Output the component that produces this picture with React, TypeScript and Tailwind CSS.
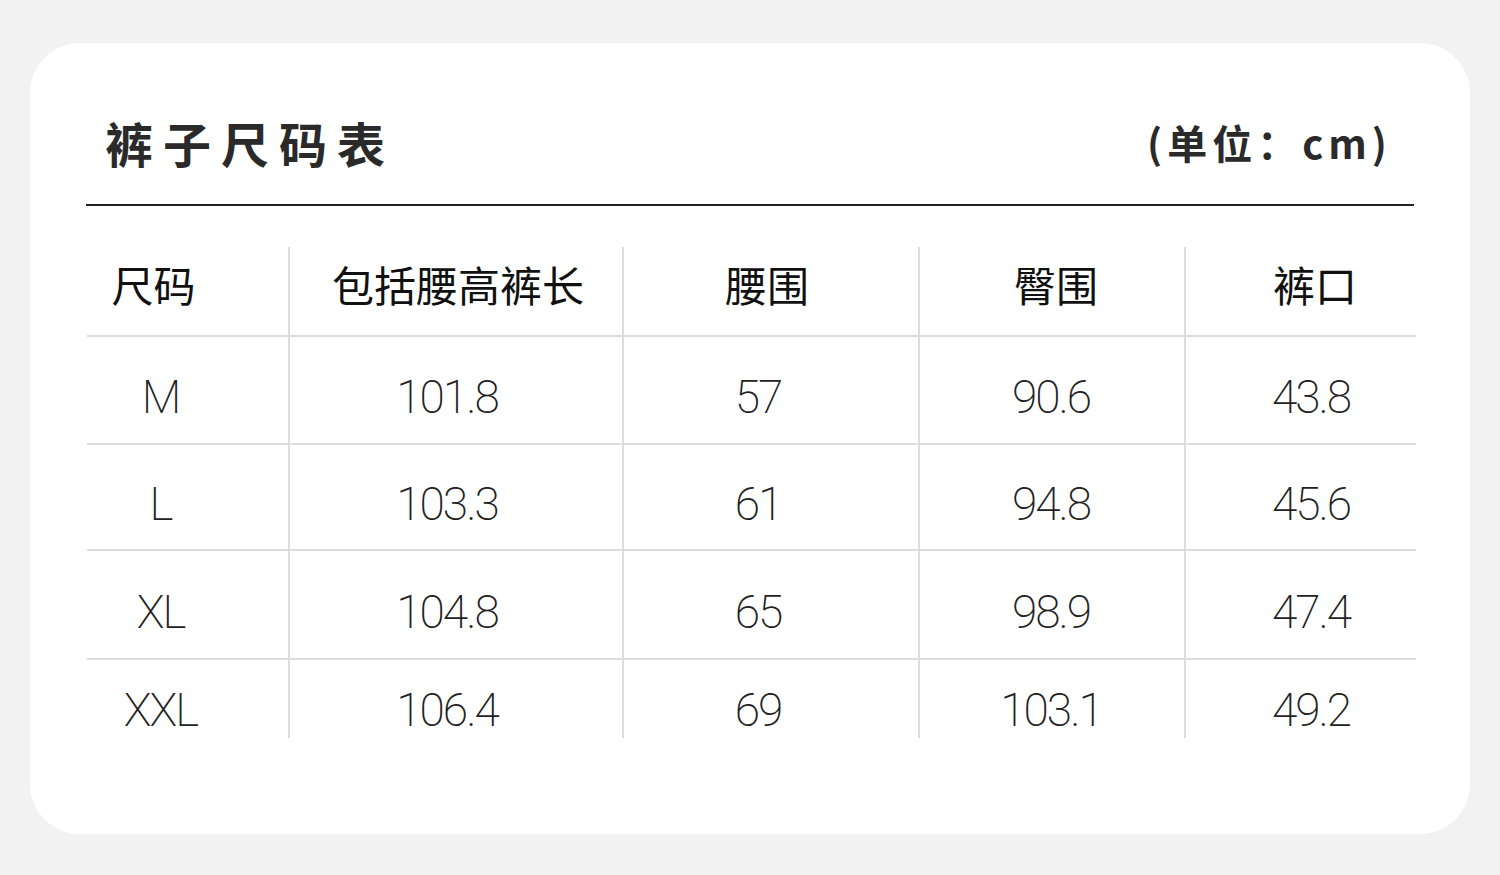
const headers = ["尺码", "包括腰高裤长", "腰围", "臀围", "裤口"]

const rows = [
  ["M", "101.8", "57", "90.6", "43.8"],
  ["L", "103.3", "61", "94.8", "45.6"],
  ["XL", "104.8", "65", "98.9", "47.4"],
  ["XXL", "106.4", "69", "103.1", "49.2"],
]

// per-column horizontal nudges so text sits where the chart has it
const colPad = ["pr-[54px]", "pr-[18px]", "pr-[26px]", "pr-[2px]", "pl-[20px]"]
const headPad = ["pr-[68px]", "pl-[4px]", "pr-[8px]", "pl-[8px]", "pl-[28px]"]

const rowHeights = ["h-[108px]", "h-[106px]", "h-[109px]", "h-[80px]"]

export default function App() {
  return (
    <div className="w-[1500px] h-[875px] bg-[#f2f2f2] pt-[43px] px-[30px]">
      <div
        className="h-[791px] bg-white rounded-[50px] px-[56px] pt-[75px]"
        style={{ fontFamily: '"Noto Sans CJK SC", "Noto Sans", sans-serif' }}
      >
        {/* Title */}
        <div className="flex items-center justify-between pl-[19px] pr-[22px] h-[48px] text-[#2a2a2a]">
          <h1 className="text-[48px] leading-none font-bold tracking-[10px]">裤子尺码表</h1>
          <span className="text-[40px] leading-none font-bold tracking-[5px]">(单位：cm)</span>
        </div>
        <div className="mt-[38px] h-[2px] bg-[#222]" />

        {/* Table */}
        <div className="mt-[41px] ml-[1px] w-[1329px]">
          <div className="grid grid-cols-[201px_334px_296px_266px_232px] h-[88px]">
            {headers.map((h, i) => (
              <div
                key={h}
                className={`flex items-center justify-center text-[42px] text-[#111] ${headPad[i]} ${i > 0 ? "border-l-2 border-[#dcdcdc]" : ""}`}
              >
                <span className="-mt-[15px]">{h}</span>
              </div>
            ))}
          </div>
          {rows.map((r, ri) => (
            <div
              key={r[0]}
              className={`grid grid-cols-[201px_334px_296px_266px_232px] border-t-2 border-[#dcdcdc] ${rowHeights[ri]}`}
            >
              {r.map((v, i) => (
                <div
                  key={i}
                  className={`flex justify-center text-[46px] font-extralight tracking-[-2px] text-[#222] ${colPad[i]} ${i > 0 ? "border-l-2 border-[#dcdcdc]" : ""} ${ri === 3 ? "items-start pt-[27px]" : "items-center pt-[14px]"}`}
                  style={{ fontFamily: 'Roboto, "Liberation Sans", sans-serif' }}
                >
                  <span className="leading-none">{v}</span>
                </div>
              ))}
            </div>
          ))}
        </div>
      </div>
    </div>
  )
}
